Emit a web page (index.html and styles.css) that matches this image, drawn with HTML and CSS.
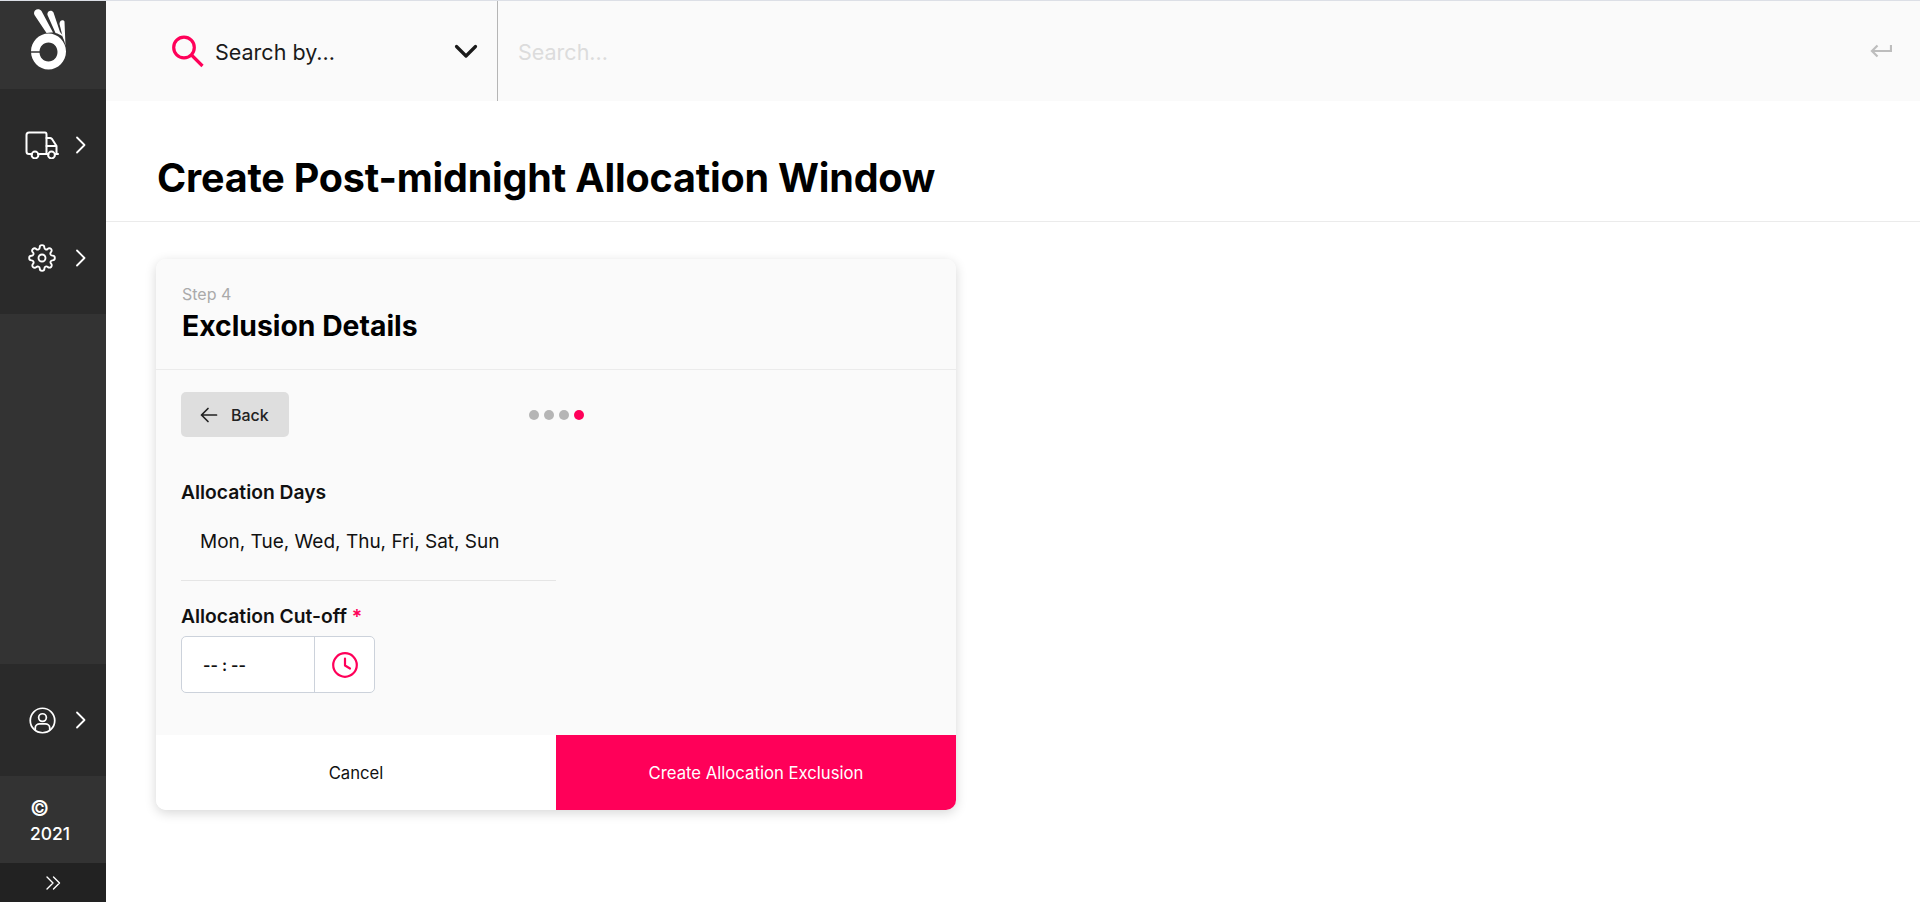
FILE: index.html
```html
<!DOCTYPE html>
<html lang="en">
<head>
<meta charset="utf-8">
<title>Create Post-midnight Allocation Window</title>
<link rel="stylesheet" href="styles.css">
</head>
<body>
<div class="app">
  <aside class="sidebar">
    <div class="logo">
      <svg class="logo-mark" width="36" height="62" viewBox="0 0 36 62">
        <path fill="#fff" d="M4 1.500C6-.5 9 0 10.500 2L22 23.500C19.500 23.200 17.500 23.500 15.500 24L3.500 6C2.700 4.500 3 2.700 4 1.500Z"/>
        <path fill="#fff" d="M17.500 2.500C19 1 21.500 1.500 22.500 3.500L29 23C30.500 24.500 31.500 26 32.500 28C29.500 26 27 24.500 24.500 24L16.500 6C16.200 4.800 16.600 3.400 17.500 2.500Z"/>
        <path fill="#fff" d="M29.500 12C30.500 11 32.800 11 33.500 12.500L34.500 37C34 33.500 33 31 32 29L28.500 15C28.500 14 28.800 12.800 29.500 12Z"/>
        <path fill="#fff" fill-rule="evenodd" d="M17.500 24.500C27 24.500 35 32.500 35 42.500C35 52.500 27 60.500 17.500 60.500C8 60.500 0 52.500 0 42.500C0 32.500 8 24.500 17.500 24.500ZM17.500 33.500C12.500 33.500 8.500 37.500 8.500 43C8.500 48.500 12.500 52.500 17.500 52.500C22.500 52.500 26.500 48.500 26.500 43C26.500 37.500 22.500 33.500 17.500 33.500Z"/>
        <path fill="none" stroke="#333" stroke-width="1.500" d="M-1 43H9"/>
      </svg>
    </div>
    <nav class="nav-group nav-main">
      <a class="nav-item">
        <span class="nav-slot"><svg width="34" height="28" viewBox="0 0 34 28" fill="none" stroke="#fff" stroke-width="2" stroke-linecap="round" stroke-linejoin="round">
          <path d="M7 23H4C2.500 23 1.500 22 1.500 20.500V4C1.500 2.500 2.500 1.500 4 1.500H20C21 1.500 21.500 2.500 21.500 3.500V23H13"/>
          <path d="M21.500 7H25C26 7 26.500 7.500 27 8L31.500 15V23H30M21.500 23H23.500M21.500 15H31.500"/>
          <circle cx="10" cy="24" r="3.400"/>
          <circle cx="26.500" cy="24" r="3.400"/>
          <path d="M30 23H33"/>
        </svg></span>
        <svg class="nav-chevron" width="11" height="18" viewBox="0 0 11 18" fill="none" stroke="#fff" stroke-width="1.800" stroke-linecap="round" stroke-linejoin="round"><path d="M2 1.500 9.500 9 2 16.500"/></svg>
      </a>
      <a class="nav-item">
        <span class="nav-slot"><svg width="28" height="28" viewBox="0 0 24 24" fill="none" stroke="#fff" stroke-width="1.600" stroke-linecap="round" stroke-linejoin="round">
          <circle cx="12" cy="12" r="3"/>
          <path d="M19.400 15a1.650 1.650 0 0 0 .33 1.820l.06.06a2 2 0 1 1-2.830 2.830l-.06-.06a1.650 1.650 0 0 0-1.820-.33 1.650 1.650 0 0 0-1 1.510V21a2 2 0 0 1-4 0v-.09A1.650 1.650 0 0 0 9 19.400a1.650 1.650 0 0 0-1.820.33l-.06.06a2 2 0 1 1-2.830-2.830l.06-.06a1.650 1.650 0 0 0 .33-1.820 1.650 1.650 0 0 0-1.510-1H3a2 2 0 0 1 0-4h.09A1.650 1.650 0 0 0 4.600 9a1.650 1.650 0 0 0-.33-1.820l-.06-.06a2 2 0 1 1 2.830-2.830l.06.06a1.650 1.650 0 0 0 1.820.33H9a1.650 1.650 0 0 0 1-1.510V3a2 2 0 0 1 4 0v.09a1.650 1.650 0 0 0 1 1.510 1.650 1.650 0 0 0 1.820-.33l.06-.06a2 2 0 1 1 2.830 2.830l-.06.06a1.650 1.650 0 0 0-.33 1.820V9a1.650 1.650 0 0 0 1.510 1H21a2 2 0 0 1 0 4h-.09a1.650 1.650 0 0 0-1.510 1Z"/>
        </svg></span>
        <svg class="nav-chevron" width="11" height="18" viewBox="0 0 11 18" fill="none" stroke="#fff" stroke-width="1.800" stroke-linecap="round" stroke-linejoin="round"><path d="M2 1.500 9.500 9 2 16.500"/></svg>
      </a>
    </nav>
    <div class="sidebar-spacer"></div>
    <nav class="nav-group nav-user">
      <a class="nav-item">
        <span class="nav-slot"><svg width="27" height="27" viewBox="0 0 28 28" fill="none" stroke="#fff" stroke-width="1.800" stroke-linecap="round">
          <circle cx="14" cy="14" r="12.700"/>
          <circle cx="14" cy="11" r="4"/>
          <path d="M6.500 23.500V21.500C6.500 19 9 17.600 11 17.600H17C19 17.600 21.500 19 21.500 21.500V23.500"/>
        </svg></span>
        <svg class="nav-chevron" width="11" height="18" viewBox="0 0 11 18" fill="none" stroke="#fff" stroke-width="1.800" stroke-linecap="round" stroke-linejoin="round"><path d="M2 1.500 9.500 9 2 16.500"/></svg>
      </a>
    </nav>
    <div class="copyright"><span class="copy-mark">©</span><span>2021</span></div>
    <div class="collapse">
      <svg width="15" height="14" viewBox="0 0 15 14" fill="none" stroke="#fff" stroke-width="1.400" stroke-linecap="round" stroke-linejoin="round"><path d="M1 1 7 7 1 13M7.500 1 13.500 7 7.500 13"/></svg>
    </div>
  </aside>
  <main class="main">
    <header class="searchbar">
      <div class="search-by">
        <svg class="search-icon" width="33" height="33" viewBox="0 0 33 33" fill="none" stroke="#ff0059" stroke-width="3.200"><circle cx="13" cy="12.500" r="10.300"/><path d="M20.500 20 31.500 31"/></svg>
        <span class="search-label">Search by...</span>
        <svg class="search-caret" width="24" height="15" viewBox="0 0 24 15" fill="none" stroke="#1a1a1a" stroke-width="3.200" stroke-linecap="round" stroke-linejoin="round"><path d="M2.500 2.500 12 12 21.500 2.500"/></svg>
      </div>
      <div class="search-input">
        <span class="search-placeholder">Search...</span>
        <svg width="22" height="14" viewBox="0 0 22 14" fill="none" stroke="#bdbdbd" stroke-width="2.200"><path d="M21 1V7H2M7.500 1.500 2 7 7.500 12.500"/></svg>
      </div>
    </header>
    <div class="page-title"><h1>Create Post-midnight Allocation Window</h1></div>
    <section class="card">
      <div class="card-head">
        <div class="step">Step 4</div>
        <h2>Exclusion Details</h2>
      </div>
      <div class="card-body">
        <div class="toolbar">
          <button class="back" type="button">
            <svg width="18" height="16" viewBox="0 0 18 16" fill="none" stroke="#222" stroke-width="1.700" stroke-linecap="round" stroke-linejoin="round"><path d="M16.500 8H1.500M8 1.500 1.500 8 8 14.500"/></svg>
            <span>Back</span>
          </button>
          <div class="dots"><i></i><i></i><i></i><i class="active"></i></div>
        </div>
        <div class="field-label days-label">Allocation Days</div>
        <div class="days">Mon, Tue, Wed, Thu, Fri, Sat, Sun</div>
        <div class="field-label cutoff-label">Allocation Cut-off <b>*</b></div>
        <div class="time">
          <div class="time-value">-- : --</div>
          <div class="time-btn">
            <svg width="26" height="26" viewBox="0 0 26 26" fill="none" stroke="#ff0059" stroke-width="2.200" stroke-linecap="round" stroke-linejoin="round"><circle cx="13" cy="13" r="11.800"/><path d="M13 6.500V13.500L18 16.500"/></svg>
          </div>
        </div>
      </div>
      <div class="card-foot">
        <button class="btn-cancel" type="button">Cancel</button>
        <button class="btn-create" type="button">Create Allocation Exclusion</button>
      </div>
    </section>
  </main>
</div>
</body>
</html>
```
FILE: styles.css
```css
* { box-sizing: border-box; }
html, body { margin: 0; height: 100%; }
body {
  font-family: "Inter", "Liberation Sans", sans-serif;
  color: #111;
  background: #fff;
  overflow: hidden;
}
.app { display: flex; height: 902px; border-top: 1px solid #dcdfe6; }
.sidebar { width: 106px; flex: none; display: flex; flex-direction: column; background: #333; color: #fff; }
.logo { height: 88px; display: flex; justify-content: center; padding: 8px 8px 0 0; }
.logo-mark { display: block; overflow: visible; }
.nav-group { background: #2a2a2a; display: flex; flex-direction: column; }
.nav-main { height: 225px; }
.nav-user { height: 112px; }
.nav-item { display: flex; align-items: center; padding-left: 25px; flex: 1; }
.nav-slot { width: 34px; flex: none; display: flex; justify-content: center; }
.nav-chevron { display: block; flex: none; margin-left: 16px; }
.sidebar-spacer { flex: 1; }
.copyright { height: 87px; padding: 20px 0 0 30px; font-size: 17.500px; line-height: 25px; font-weight: 500; display: flex; flex-direction: column; }
.copy-mark { font-size: 21px; }
.collapse { height: 39px; background: #222; display: flex; align-items: center; justify-content: center; }
.main { flex: 1; display: flex; flex-direction: column; min-width: 0; }
.searchbar { height: 100px; background: #fafafa; display: flex; flex: none; }
.search-by { width: 392px; border-right: 1px solid #b5b5b5; display: flex; align-items: center; padding: 0 19px 0 65px; }
.search-icon { margin-right: 11px; }
.search-label { font-size: 21.500px; padding-top: 2px; flex: 1; color: #1a1a1a; }
.search-input { flex: 1; display: flex; align-items: center; justify-content: space-between; padding: 0 28px 0 20px; }
.search-placeholder { font-size: 21.500px; padding-top: 2px; color: #dcdcdc; }
.page-title { height: 121px; padding: 33px 51px 0; border-bottom: 1px solid #ebebeb; display: flex; align-items: center; flex: none; }
h1 { margin: 0; font-size: 39.500px; font-weight: 700; color: #000; letter-spacing: -.2px; }
.card { width: 800px; margin: 37px 0 0 50px; background: #fff; border-radius: 10px; box-shadow: 0 3px 12px rgba(0,0,0,.16); overflow: hidden; }
.card-head { height: 111px; background: #fafafa; border-bottom: 1px solid #ebebeb; padding: 26px 25px 0 26px; }
.step { font-size: 16px; line-height: 18px; color: #aaa; }
h2 { margin: 6px 0 0; font-size: 28.300px; line-height: 34px; font-weight: 700; color: #000; }
.card-body { height: 365px; background: #fafafa; padding: 22px 25px 0; }
.toolbar { display: flex; align-items: center; height: 45px; }
.back { width: 108px; height: 45px; border: 0; border-radius: 5px; background: #dedede; display: flex; align-items: center; gap: 13px; padding: 0 0 0 19px; font: 500 16px "Inter", sans-serif; color: #222; }
.dots { display: flex; gap: 5px; margin-left: 240px; }
.dots i { width: 10px; height: 10px; border-radius: 50%; background: #b5b5b5; }
.dots i.active { background: #ff0059; }
.field-label { font-size: 19.300px; line-height: 22px; font-weight: 600; color: #111; }
.field-label b { color: #ff0059; font-weight: 600; }
.days-label { margin-top: 44px; }
.days { width: 375px; height: 66px; margin-top: 12px; padding: 16px 0 0 19px; font-size: 19px; line-height: 22px; color: #111; border-bottom: 1px solid #e5e5e5; }
.cutoff-label { margin-top: 24px; }
.time { width: 194px; height: 57px; margin-top: 9px; display: flex; background: #fff; border: 1px solid #ccd2db; border-radius: 5px; }
.time-value { width: 133px; border-right: 1px solid #ccd2db; padding-left: 21px; display: flex; align-items: center; font-size: 16px; font-weight: 600; }
.time-btn { flex: 1; display: flex; align-items: center; justify-content: center; }
.card-foot { height: 75px; display: flex; }
.card-foot button { border: 0; font: 400 16.700px "Inter", sans-serif; flex: 1; }
.btn-cancel { background: #fff; color: #111; }
.btn-create { background: #ff0059; color: #fff; }
```
